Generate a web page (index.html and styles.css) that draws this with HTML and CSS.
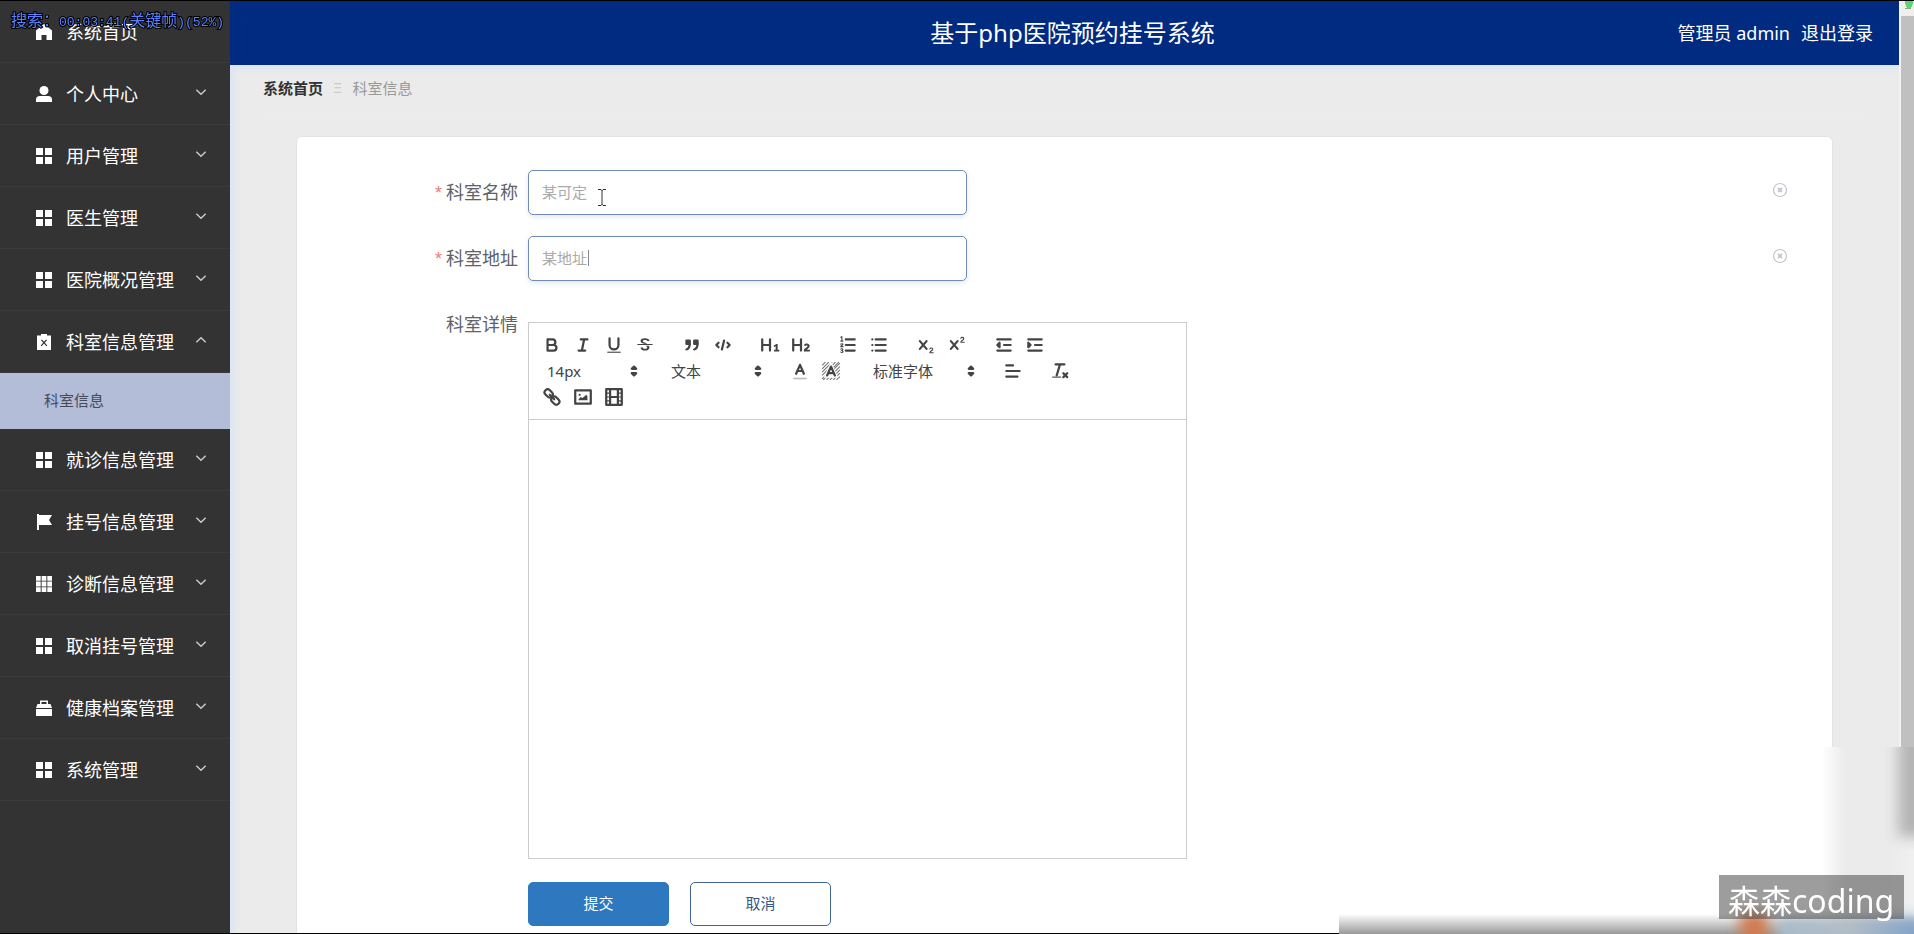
FILE: index.html
```html
<!DOCTYPE html>
<html lang="zh-CN">
<head>
<meta charset="utf-8">
<title>基于php医院预约挂号系统</title>
<link rel="stylesheet" href="styles.css">
</head>
<body>
<svg class="defs" aria-hidden="true">
  <symbol id="i-grid" viewBox="0 0 16 16"><path d="M0 0h7v7H0zM9 0h7v7H9zM0 9h7v7H0zM9 9h7v7H9z"/></symbol>
  <symbol id="i-home" viewBox="0 0 16 16"><path d="M8 0 16 6.500V16H10.500V11h-5V16H0V6.500Z"/></symbol>
  <symbol id="i-user" viewBox="0 0 16 16"><circle cx="8" cy="4.500" r="4.500"/><path d="M0 16v-2.500q0-3.500 4-3.500h8q4 0 4 3.500V16z"/></symbol>
  <symbol id="i-clip" viewBox="0 0 16 16"><path fill-rule="evenodd" d="M1 1.500h4V0h6v1.500h4V16H1zM5 6.200 7.200 8.700 4.700 11.500l.9.800L8 9.600l2.400 2.700.9-.8L8.800 8.700 11 6.200l-.9-.8L8 7.800 5.900 5.400z"/></symbol>
  <symbol id="i-flag" viewBox="0 0 16 16"><path d="M1 0h2v1h13l-3 5 3 5H3v5.500H1z"/></symbol>
  <symbol id="i-nine" viewBox="0 0 16 16"><path d="M0 0h4.700v4.700H0zM5.600 0h4.800v4.700H5.600zM11.300 0H16v4.700h-4.700zM0 5.600h4.700v4.800H0zM5.600 5.600h4.800v4.800H5.600zM11.300 5.600H16v4.800h-4.700zM0 11.300h4.700V16H0zM5.600 11.300h4.800V16H5.600zM11.300 11.300H16V16h-4.700z"/></symbol>
  <symbol id="i-case" viewBox="0 0 16 16"><path fill-rule="evenodd" d="M4 0.500h8v3.500h2.500L16 8H0l1.500-4H4zM5.500 2v2h5V2zM0 9h16v7H0z"/></symbol>
  <symbol id="i-down" viewBox="0 0 12 12"><path d="M2 4 6 8l4-4" fill="none" stroke="currentColor" stroke-width="1.200"/></symbol>
  <symbol id="i-up" viewBox="0 0 12 12"><path d="M2 8 6 4l4 4" fill="none" stroke="currentColor" stroke-width="1.200"/></symbol>
  <symbol id="i-clear" viewBox="0 0 16 16"><circle cx="8" cy="8" r="6.500" fill="none" stroke="currentColor" stroke-width="1.200"/><path d="m6 6 4 4m0-4-4 4" stroke="currentColor" stroke-width="1.800"/></symbol>
  <symbol id="i-updown" viewBox="0 0 18 18"><path class="f" d="m7 11 2 2 2-2zM7 7l2-2 2 2z"/><path class="s" d="m7 11 2 2 2-2zM7 7l2-2 2 2z"/></symbol>
</svg>

<div class="app">
  <nav class="sidebar" aria-label="主菜单">
    <ul class="menu">
      <li><a class="item" href="#"><svg class="ico"><use href="#i-home"/></svg><span>系统首页</span></a></li>
      <li><a class="item" href="#"><svg class="ico"><use href="#i-user"/></svg><span>个人中心</span><svg class="arrow"><use href="#i-down"/></svg></a></li>
      <li><a class="item" href="#"><svg class="ico"><use href="#i-grid"/></svg><span>用户管理</span><svg class="arrow"><use href="#i-down"/></svg></a></li>
      <li><a class="item" href="#"><svg class="ico"><use href="#i-grid"/></svg><span>医生管理</span><svg class="arrow"><use href="#i-down"/></svg></a></li>
      <li><a class="item" href="#"><svg class="ico"><use href="#i-grid"/></svg><span>医院概况管理</span><svg class="arrow"><use href="#i-down"/></svg></a></li>
      <li><a class="item" href="#"><svg class="ico"><use href="#i-clip"/></svg><span>科室信息管理</span><svg class="arrow"><use href="#i-up"/></svg></a>
        <ul class="submenu"><li><a class="subitem" href="#">科室信息</a></li></ul></li>
      <li><a class="item" href="#"><svg class="ico"><use href="#i-grid"/></svg><span>就诊信息管理</span><svg class="arrow"><use href="#i-down"/></svg></a></li>
      <li><a class="item" href="#"><svg class="ico"><use href="#i-flag"/></svg><span>挂号信息管理</span><svg class="arrow"><use href="#i-down"/></svg></a></li>
      <li><a class="item" href="#"><svg class="ico"><use href="#i-nine"/></svg><span>诊断信息管理</span><svg class="arrow"><use href="#i-down"/></svg></a></li>
      <li><a class="item" href="#"><svg class="ico"><use href="#i-grid"/></svg><span>取消挂号管理</span><svg class="arrow"><use href="#i-down"/></svg></a></li>
      <li><a class="item" href="#"><svg class="ico"><use href="#i-case"/></svg><span>健康档案管理</span><svg class="arrow"><use href="#i-down"/></svg></a></li>
      <li><a class="item" href="#"><svg class="ico"><use href="#i-grid"/></svg><span>系统管理</span><svg class="arrow"><use href="#i-down"/></svg></a></li>
    </ul>
  </nav>

  <div class="content">
    <header class="topbar">
      <h1 class="title">基于php医院预约挂号系统</h1>
      <div class="account"><span>管理员 admin</span><a href="#">退出登录</a></div>
    </header>
    <main class="main">
      <nav class="crumbs" aria-label="面包屑">
        <a href="#">系统首页</a><span class="sep">Ξ</span><span>科室信息</span>
      </nav>
      <form class="card">
        <div class="row">
          <label class="label required" for="name">科室名称</label>
          <input class="text" id="name" type="text" value="某可定">
          <button class="clear" type="button" aria-label="清除科室名称"><svg><use href="#i-clear"/></svg></button>
        </div>
        <div class="row">
          <label class="label required" for="addr">科室地址</label>
          <div class="field"><input class="text" id="addr" type="text" value="某地址"><i class="caret"></i></div>
          <button class="clear" type="button" aria-label="清除科室地址"><svg><use href="#i-clear"/></svg></button>
        </div>
        <div class="row">
          <span class="label" id="detail-label">科室详情</span>
          <div class="editor">
            <div class="toolbar">
              <div class="line">
                <div class="group">
                  <button type="button" aria-label="粗体"><svg viewBox="0 0 18 18"><path class="s" d="M5 4h4.500a2.500 2.500 0 0 1 0 5H5zM5 9h5.500a2.500 2.500 0 0 1 0 5H5z"/></svg></button>
                  <button type="button" aria-label="斜体"><svg viewBox="0 0 18 18"><path class="s" d="M7 4h6M5 14h6M8 14l2-10"/></svg></button>
                  <button type="button" aria-label="下划线"><svg viewBox="0 0 18 18"><path class="s" d="M5 3v6a4 4 0 0 0 8 0V3"/><rect class="f" x="3" y="15" width="12" height="1"/></svg></button>
                  <button type="button" aria-label="删除线"><svg viewBox="0 0 18 18"><path class="s t" d="M15.500 8.500h-13"/><path class="f" d="M9 8c-2-.4-4-.9-4-2.700C5 3.700 6.600 3 9 3c2.200 0 4 .8 4 2.500h-2C11 4.800 10.100 4.600 9 4.600S7 4.900 7 5.600C7 6.700 9.500 6.900 11 8zM9 9.600c1.500.3 2 .8 2 1.600 0 .7-.8 1.200-2 1.200s-2-.4-2-1.200H5C5 13 6.600 14 9 14s4-1 4-2.800c0-.7-.2-1.200-.6-1.600z"/></svg></button>
                </div>
                <div class="group">
                  <button type="button" aria-label="引用"><svg viewBox="0 0 18 18"><rect class="f s" x="4" y="5" width="3" height="3"/><rect class="f s" x="11" y="5" width="3" height="3"/><path class="f s" d="M7 8c0 4.030-3 5-3 5M14 8c0 4.030-3 5-3 5"/></svg></button>
                  <button type="button" aria-label="代码"><svg viewBox="0 0 18 18"><path class="s" d="M5 7 3 9l2 2M13 7l2 2-2 2M10 5 8 13"/></svg></button>
                </div>
                <div class="group">
                  <button type="button" aria-label="标题1"><svg viewBox="0 0 18 18"><path class="f" d="M10 4v10a1 1 0 0 1-2 0v-4H3v4a1 1 0 0 1-2 0V4a1 1 0 0 1 2 0v4h5V4a1 1 0 0 1 2 0zM15.900 13.200V8h-1.200l-2.600 1.600.7 1.200 1.300-.7v3.100h-1.500V14.800h4.800v-1.600z"/></svg></button>
                  <button type="button" aria-label="标题2"><svg viewBox="0 0 18 18"><path class="f" d="M17 14.800h-5.400v-1c0-1.600 3.300-2.700 3.300-3.800 0-.5-.4-.7-.8-.7-.6 0-.9.300-1.200.800l-1.300-.8c.4-1 1.300-1.600 2.600-1.600 1.500 0 2.600.800 2.600 2.200 0 1.700-1.900 2.300-2.500 3.300H17zM10 4v10a1 1 0 0 1-2 0v-4H3v4a1 1 0 0 1-2 0V4a1 1 0 0 1 2 0v4h5V4a1 1 0 0 1 2 0z"/></svg></button>
                </div>
                <div class="group">
                  <button type="button" aria-label="有序列表"><svg viewBox="0 0 18 18"><path class="s" d="M7 4h8M7 9h8M7 14h8"/><path class="s t" d="M2.500 5.500h2M3.500 5.500v-4L2.500 2M4.500 10.500h-2c0-1 1.900-1.200 1.900-2.100 0-.6-1.300-.8-1.900-.1M2.500 12.700c.6-.5 1.800-.3 1.800.5 0 .6-.6.800-1 .8.500 0 1.200.2 1.200.9 0 .9-1.400 1.100-2 .4"/></svg></button>
                  <button type="button" aria-label="无序列表"><svg viewBox="0 0 18 18"><path class="s" d="M6 4h9M6 9h9M6 14h9M3 4h0M3 9h0M3 14h0"/></svg></button>
                </div>
                <div class="group">
                  <button type="button" aria-label="下标"><svg viewBox="0 0 18 18"><path class="s" d="m3.500 5.500 6 7M9.500 5.500l-6 7"/><path class="s t" d="M12.500 12.500c.4-1.300 2.600-1 2.600.300 0 1.200-2.600 1.700-2.600 3.200h3"/></svg></button>
                  <button type="button" aria-label="上标"><svg viewBox="0 0 18 18"><path class="s" d="m3.500 5.500 6 7M9.500 5.500l-6 7"/><path class="s t" d="M12.500 3c.4-1.300 2.600-1 2.600.300C15.100 4.500 12.500 5 12.500 6.500h3"/></svg></button>
                </div>
                <div class="group">
                  <button type="button" aria-label="减少缩进"><svg viewBox="0 0 18 18"><path class="s" d="M3 14h12M3 4h12M9 9h6"/><path class="f s" d="M5 7v4L3 9z"/></svg></button>
                  <button type="button" aria-label="增加缩进"><svg viewBox="0 0 18 18"><path class="s" d="M3 14h12M3 4h12M9 9h6"/><path class="f s" d="M3 7v4l2-2z"/></svg></button>
                </div>
              </div>
              <div class="line">
                <label class="picker"><select aria-label="字号"><option>14px</option></select><svg><use href="#i-updown"/></svg></label>
                <label class="picker"><select aria-label="段落"><option>文本</option></select><svg><use href="#i-updown"/></svg></label>
                <div class="group">
                  <button type="button" aria-label="文字颜色"><svg viewBox="0 0 18 18"><path class="pale" d="M3 15h12v1.500H3z"/><path class="s" d="M5.500 11.500 9 3.500l3.500 8M7 9h4"/></svg></button>
                  <button type="button" aria-label="背景颜色"><svg viewBox="0 0 18 18"><path class="h" d="M1 4l3-3M1 7l6-6M1 10l9-9M1 13 13 1M1 16 16 1M2 17 17 2M5 17 17 5M8 17l9-9M11 17l6-6M14 17l3-3"/><path class="halo" d="M5.500 13 9 5l3.500 8z"/><path class="s" d="M5.500 13 9 5l3.500 8M7 11h4"/></svg></button>
                </div>
                <label class="picker wide"><select aria-label="字体"><option>标准字体</option></select><svg><use href="#i-updown"/></svg></label>
                <div class="group"><button type="button" aria-label="对齐"><svg viewBox="0 0 18 18"><path class="s" d="M3 9h12M3 14h10M3 4h6"/></svg></button></div>
                <div class="group"><button type="button" aria-label="清除格式"><svg viewBox="0 0 18 18"><path class="s" d="M5 3h8M6 13 9 3M12 11l3.500 3.500M15.500 11 12 14.500"/><rect class="f" x="2" y="14" width="8" height="1"/></svg></button></div>
              </div>
              <div class="line">
                <div class="group">
                  <button type="button" aria-label="链接"><svg viewBox="0 0 18 18"><path class="s" d="m7 7 4 4"/><rect class="s" x="2" y="3" width="8" height="5.500" rx="2.700" transform="rotate(45 6 5.750)"/><rect class="s" x="8" y="9.500" width="8" height="5.500" rx="2.700" transform="rotate(45 12 12.250)"/></svg></button>
                  <button type="button" aria-label="图片"><svg viewBox="0 0 18 18"><rect class="s" x="2" y="3" width="14" height="12"/><circle class="f" cx="6" cy="7" r="1"/><path class="f" d="M5 12v-1l2-2 1.500 1L12 7l1 1.500V12z"/></svg></button>
                  <button type="button" aria-label="视频"><svg viewBox="0 0 18 18"><rect class="s" x="2" y="2" width="14" height="14"/><path class="s" d="M5.500 2v14M12.500 2v14M5.500 9h7"/><path class="s t" d="M2 5.500h3M2 9h3M2 12.500h3M13 5.500h3M13 9h3M13 12.500h3"/></svg></button>
                </div>
              </div>
            </div>
            <div class="paper" contenteditable="true" role="textbox" aria-labelledby="detail-label"></div>
          </div>
        </div>
        <div class="actions">
          <button class="btn primary" type="submit">提交</button>
          <button class="btn" type="button">取消</button>
        </div>
      </form>
    </main>
  </div>
  <div class="scroll"><div class="scroll-top"></div></div>
</div>

<div class="haze"><i class="thumb"></i><i class="floor"></i><i class="glow blue"></i><i class="glow orange"></i></div>
<div class="badge">森森coding</div>
<div class="osd">搜索：<b>00:03:41(</b>关键帧<b>)(52%)</b></div>
<svg class="pointer" viewBox="0 0 8 17"><path d="M0 .5h3l1 1 1-1h3M0 16.500h3l1-1 1 1h3M4 1v15"/></svg>
</body>
</html>
```
FILE: styles.css
```css
* { box-sizing: border-box; }

body {
  margin: 0;
  background: #000;
  font-family: "Noto Sans", "Noto Sans CJK SC", sans-serif;
  font-size: 15px;
  color: #606266;
}

a { color: inherit; text-decoration: none; }
ul { margin: 0; padding: 0; list-style: none; }
button, input, select { font: inherit; color: inherit; }
.defs { display: none; }

.app {
  display: flex;
  height: 100vh;
  padding: 1px 0;
  overflow: hidden;
}

/* Sidebar */
.sidebar {
  flex: 0 0 230px;
  background: #333;
  color: #fff;
}
.item {
  display: flex;
  align-items: center;
  height: 62px;
  padding: 0 22px 0 36px;
  border-bottom: 1px solid #3a3a3a;
  font-size: 18px;
}
.item span { padding-bottom: 2px; }
.ico {
  width: 16px;
  height: 16px;
  margin-right: 14px;
  fill: #fff;
}
.arrow {
  width: 14px;
  height: 14px;
  margin: 0 0 4px auto;
  color: #ccc;
}
.subitem {
  display: flex;
  align-items: center;
  height: 56px;
  padding: 0 0 3px 44px;
  background: #b3bdd8;
  color: #444a58;
}

/* Header */
.content {
  flex: 1;
  display: flex;
  flex-direction: column;
  min-width: 0;
  background: #ebebeb;
}
.topbar {
  display: grid;
  grid-template-columns: 1fr auto 1fr;
  align-items: center;
  flex: 0 0 64px;
  padding: 0 26px 3px 42px;
  background: #002b80;
  color: #fff;
}
.title {
  grid-column: 2;
  margin: 0;
  font-size: 24px;
  font-weight: 400;
}
.account {
  display: flex;
  justify-content: flex-end;
  gap: 11px;
  font-size: 18px;
}

/* Page body */
.main {
  flex: 1;
  display: flex;
  flex-direction: column;
  min-height: 0;
  padding: 0 33px;
  box-shadow: inset 4px 4px 6px #dbe5f3;
}
.crumbs {
  display: flex;
  align-items: center;
  gap: 10px;
  height: 50px;
  margin-bottom: 21px;
  padding-bottom: 5px;
  border-bottom: 1px solid #eeecec;
  color: #999;
}
.crumbs a { color: #303133; font-weight: 700; }
.crumbs .sep { color: #ccc; }

.card {
  flex: 1 0 auto;
  margin: 0 33px;
  padding: 33px 33px 0;
  border: 1px solid #e3e3e3;
  border-bottom: 0;
  border-radius: 6px 6px 0 0;
  background: #fff;
}
.row {
  display: flex;
  align-items: flex-start;
  margin-bottom: 21px;
}
.label {
  flex: 0 0 198px;
  padding-right: 10px;
  font-size: 18px;
  line-height: 45px;
  text-align: right;
}
.required::before {
  content: "*";
  margin-right: 4px;
  color: #ee7c74;
  font-family: "Liberation Sans", sans-serif;
  line-height: 1;
}
.field { position: relative; }
.text {
  display: block;
  width: 439px;
  height: 45px;
  padding: 0 13px 3px;
  border: 1px solid #6f8cb8;
  border-radius: 5px;
  outline: 0;
  background: #fff;
  box-shadow: 0 2px 5px #e3e7f0;
  color: #aaa;
}
.caret {
  position: absolute;
  top: 14px;
  left: 60px;
  width: 1px;
  height: 16px;
  background: #888;
}
.clear {
  width: 16px;
  height: 16px;
  margin: 12px 11px 0 auto;
  padding: 0;
  border: 0;
  background: none;
  color: #c3c6ce;
}
.clear svg { display: block; width: 16px; height: 16px; }

/* Editor */
.editor {
  width: 659px;
  margin-top: 20px;
  border: 1px solid #ccc;
}
.toolbar {
  padding: 9px 8px;
  border-bottom: 1px solid #ccc;
}
.line {
  display: flex;
  gap: 16px;
  height: 26px;
}
.group { display: flex; }
.group button {
  width: 31px;
  height: 26px;
  padding: 3px 5px;
  border: 0;
  background: none;
}
.group svg { display: block; width: 20px; height: 20px; }
.s {
  fill: none;
  stroke: #444;
  stroke-width: 2;
  stroke-linecap: round;
  stroke-linejoin: round;
}
.f { fill: #444; }
.t { stroke-width: 1; }
.h { stroke: #777; stroke-width: 1; }
.pale { fill: #bbb; }
.halo { fill: #fff; stroke: #fff; stroke-width: 4; }

.picker {
  position: relative;
  width: 108px;
  color: #444;
}
.picker.wide { width: 119px; }
.picker select {
  width: 100%;
  height: 26px;
  padding: 0 10px;
  border: 0;
  outline: 0;
  appearance: none;
  background: none;
}
.picker svg {
  position: absolute;
  top: 3px;
  right: 1px;
  width: 20px;
  height: 20px;
  pointer-events: none;
}
.paper { height: 438px; outline: 0; }

.actions {
  display: flex;
  gap: 21px;
  padding: 2px 0 6px 198px;
}
.btn {
  width: 141px;
  height: 44px;
  padding-bottom: 4px;
  border: 1px solid #3f6596;
  border-radius: 5px;
  background: #fff;
  color: #33598a;
}
.btn.primary {
  border-color: #2d78be;
  background: #2d78be;
  color: #fff;
}

/* Scroll bar */
.scroll {
  flex: 0 0 15px;
  border-left: 2px solid #f3f3f3;
  background: #c0c0c0;
}
.scroll-top {
  height: 15px;
  background: radial-gradient(ellipse 4px 7px at 8px 1px, #5fd473 90%, transparent), linear-gradient(#999, #999) 4px 7px / 6px 1px no-repeat, #f1eeee;
}

/* Overlays */
.haze {
  position: fixed;
  right: 0;
  bottom: 0;
  width: 575px;
  height: 187px;
  overflow: hidden;
  background: linear-gradient(to left, #f0f0f0 0, #ebebeb 24px, #ebebeb 68px, #f4f4f4 80px, #fff 92px);
}
.thumb, .floor, .glow { position: absolute; }
.thumb {
  top: -20px;
  right: -16px;
  width: 32px;
  height: 110px;
  background: #b4b4b4;
  filter: blur(7px);
}
.floor {
  right: 0;
  bottom: 0;
  left: 0;
  height: 20px;
  background: linear-gradient(transparent, #999);
}
.glow { filter: blur(7px); }
.glow.orange {
  right: 146px;
  bottom: -12px;
  width: 28px;
  height: 34px;
  background: #d07a50;
}
.glow.blue {
  right: -10px;
  bottom: -10px;
  width: 148px;
  height: 26px;
  background: linear-gradient(to right, #a9bccb, #b2bec8 50%, #7ba0cb);
}
.badge {
  position: fixed;
  right: 10px;
  bottom: 15px;
  width: 185px;
  height: 44px;
  padding-left: 9px;
  background: rgba(60, 60, 60, .5);
  color: #fff;
  font-size: 32px;
  line-height: 52px;
}
.osd {
  position: fixed;
  top: 10px;
  left: 11px;
  color: #5a80ff;
  font-size: 16px;
  line-height: 20px;
  white-space: nowrap;
  -webkit-text-stroke: 2px #000;
  paint-order: stroke fill;
}
.osd b { font: 400 13px/20px "Liberation Mono", monospace; }
.pointer {
  position: fixed;
  top: 189px;
  left: 598px;
  width: 8px;
  height: 17px;
  fill: none;
  stroke: #333;
}
```
